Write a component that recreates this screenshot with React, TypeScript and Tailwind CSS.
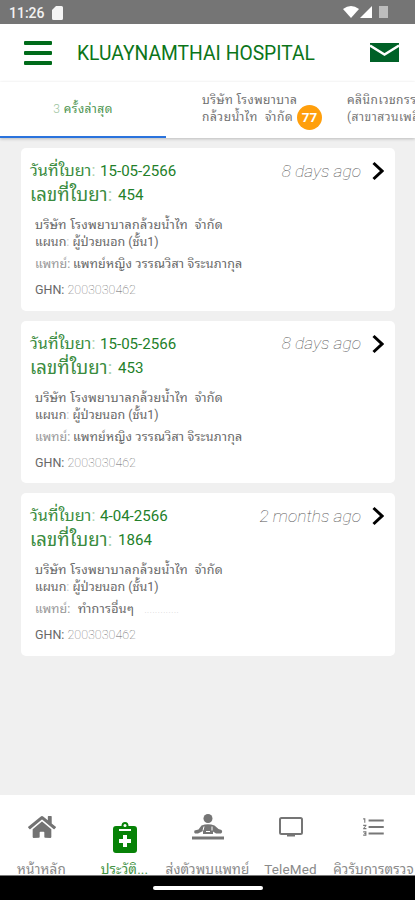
import React from "react";
import { MdFormatListNumbered } from "react-icons/md";
import { FaHome } from "react-icons/fa";

const prescriptions = [
  {
    date: "15-05-2566",
    number: "454",
    ago: "8 days ago",
    doctor: "แพทย์หญิง วรรณวิสา จิระนภากุล",
  },
  {
    date: "15-05-2566",
    number: "453",
    ago: "8 days ago",
    doctor: "แพทย์หญิง วรรณวิสา จิระนภากุล",
  },
  {
    date: "4-04-2566",
    number: "1864",
    ago: "2 months ago",
    doctor: "ทำการอื่นๆ",
    dotted: true,
  },
];

const StatusBar = () => (
  <div className="flex h-[24px] shrink-0 items-center justify-between bg-[#757575] pl-[9px] pr-[27px] text-white">
    <div className="flex items-center gap-[7px] pt-px">
      <span className="w-[36px] whitespace-nowrap text-[14px] font-medium leading-none text-[#f2f2f2]">
        11:26
      </span>
      <svg width="11" height="14" viewBox="0 0 11 14" fill="#f5f5f5">
        <path d="M4 0h5.500A1.500 1.500 0 0 1 11 1.500v11a1.500 1.500 0 0 1-1.500 1.500h-8A1.500 1.500 0 0 1 0 12.500V4z" />
      </svg>
    </div>
    <div className="flex items-center">
      <svg width="16" height="12" viewBox="0 0 16 12" fill="#fff">
        <path d="M0 3Q8-3 16 3L8 12z" />
      </svg>
      <svg className="ml-px" width="12" height="12" viewBox="0 0 12 12" fill="#fff">
        <path d="M12 0v12H0z" />
      </svg>
      <svg className="ml-[7px]" width="9" height="12" viewBox="0 0 9 12" fill="#bdbdbd">
        <path d="M0 0h9v12H0z" />
      </svg>
    </div>
  </div>
);

const Header = () => (
  <header className="flex h-[58px] shrink-0 items-center bg-white pl-[24px] pr-[16px]">
    <svg width="28" height="26" viewBox="0 0 28 26" fill="#006b1a">
      <rect y="1" width="28" height="4" rx="1" />
      <rect y="11" width="28" height="4" rx="1" />
      <rect y="21" width="28" height="4" rx="1" />
    </svg>
    <h1 className="ml-[25px] whitespace-nowrap pt-[2px] text-[19.300px] leading-none text-[#0b7519]">
      KLUAYNAMTHAI HOSPITAL
    </h1>
    <svg className="mb-px ml-auto" width="29" height="19" viewBox="0 0 29 19">
      <path fill="#006127" d="M0 0h29v19H0z" />
      <path d="M0 2.500l14.500 9L29 2.500" fill="none" stroke="#fff" strokeWidth="2.500" />
    </svg>
  </header>
);

const Tabs = () => (
  <nav className="flex h-[56px] w-full shrink-0 overflow-hidden bg-white text-[12px] leading-[17px] text-[#707070] shadow-[0_1px_3px_rgba(0,0,0,0.22)]">
    <div className="flex w-[166px] shrink-0 items-center justify-center border-b-2 border-[#2a73dd] text-[#4b934e]">
      <span className="whitespace-nowrap tracking-[0.450px]">
        <span className="font-light text-[#9cc49e]">3</span> ครั้งล่าสุด
      </span>
    </div>
    <div className="flex w-[181px] shrink-0 pl-[36px] pt-[10px]">
      <p className="w-[95px] whitespace-nowrap">
        <span className="tracking-[0.450px]">บริษัท โรงพยาบาล</span>
        <br />
        <span className="tracking-[0.600px]">กล้วยน้ำไท&nbsp; จำกัด</span>
      </p>
      <span className="mt-[13px] flex size-[25px] shrink-0 items-center justify-center rounded-full bg-[#ff9f0c] text-[13.500px] font-bold text-white">
        77
      </span>
    </div>
    <p className="shrink-0 whitespace-nowrap pt-[10px] tracking-[0.500px]">
      คลินิกเวชกรรมกล้วยน้ำไท
      <br />
      <span className="text-[#777]">(สาขาสวนเพลินมาร์เก็ต)</span>
    </p>
  </nav>
);

const PrescriptionCard = ({ item }: { item: (typeof prescriptions)[number] }) => (
  <article className="flex h-[162.500px] justify-between rounded-[5px] bg-white pl-[9px] pr-[11px]">
    <div className="whitespace-nowrap">
      <div className="pt-[11px] text-[15.100px] leading-[24px] text-[#237f2a]">
        <div className="flex">
          <span className="w-[70px] text-[16.200px] text-[#3a8c40]">
            วันที่ใบยา<span className="text-[#a9cfab]">:</span>
          </span>
          <span>{item.date}</span>
        </div>
        <div className="flex">
          <span className="w-[88px] text-[18.500px] tracking-[0.100px] text-[#3a8c40]">
            เลขที่ใบยา<span className="text-[#a9cfab]">:</span>
          </span>
          <span>{item.number}</span>
        </div>
      </div>
      <div className="pl-[5px] pt-[9px] text-[12.500px] leading-[17px] text-[#686868]">
        <p className="tracking-[0.300px]">บริษัท โรงพยาบาลกล้วยน้ำไท&nbsp; จำกัด</p>
        <p>
          แผนก<span className="text-[#ccc]">:</span> ผู้ป่วยนอก (ชั้น1)
        </p>
        <p className="mt-[5px] flex">
          <span className="w-[38px] text-[#999]">แพทย์:</span>
          <span className={item.dotted ? "ml-[5px] tracking-[0.300px]" : "tracking-[0.200px]"}>
            {item.doctor}
          </span>
          {item.dotted && (
            <span className="ml-[10px] font-thin text-[#bbb]">.............</span>
          )}
        </p>
        <p className="mt-[9px]">
          GHN: <span className="font-thin text-[#666]">2003030462</span>
        </p>
      </div>
    </div>
    <div className="flex h-[20px] items-center pt-[23px]">
      <span className="whitespace-nowrap pt-px text-[17.400px] font-thin italic leading-none text-[#555]">
        {item.ago}
      </span>
      <svg className="ml-[11px]" width="12" height="20" viewBox="0 0 12 20" fill="none">
        <path d="M1.500 2l8.500 8-8.500 8" stroke="#000" strokeWidth="3" />
      </svg>
    </div>
  </article>
);

const ClipboardIcon = () => (
  <svg width="24" height="32" viewBox="0 0 24 32">
    <path
      fill="#078207"
      d="M3 5h5.500a3.500 4 0 0 1 7 0H21a3 3 0 0 1 3 3v21a3 3 0 0 1-3 3H3a3 3 0 0 1-3-3V8a3 3 0 0 1 3-3z"
    />
    <circle cx="12" cy="4.500" r="1.500" fill="#fff" />
    <path fill="#fff" d="M6 8h12v2H6zM10 14h4v4h4v4h-4v4h-4v-4H6v-4h4z" />
  </svg>
);

const PhysioIcon = () => (
  <svg width="32" height="26" viewBox="0 0 32 26" fill="#757575">
    <circle cx="16" cy="4.500" r="4.500" />
    <path d="M9.500 11.500q6.500-2.500 13 0l4 3.500 3 1q1.500 2-.5 3.500h-5l-3-2v2.500H11V17l-5 2.500H3q-1.500-1-.5-3l4-1z" />
    <path d="M12 12.500l-1 4M20 12.500v4M14 17.500h4" stroke="#fff" fill="none" />
    <path d="M0 22.500h32v3H0z" />
  </svg>
);

const TvIcon = () => (
  <svg width="24" height="20" viewBox="0 0 24 20" fill="none" stroke="#757575" strokeWidth="2">
    <rect x="1" y="1" width="22" height="16" rx="1.500" />
    <path d="M8 18.500h8" />
  </svg>
);

const navItems = [
  { label: "หน้าหลัก", icon: <FaHome size={28} color="#737373" /> },
  { label: "ประวัติ...", icon: <ClipboardIcon />, active: true },
  { label: "ส่งตัวพบแพทย์", icon: <PhysioIcon /> },
  { label: "TeleMed", icon: <TvIcon /> },
  { label: "คิวรับการตรวจ", icon: <MdFormatListNumbered size={26} color="#777" /> },
];

const BottomNav = () => (
  <nav className="flex h-[81px] shrink-0 overflow-hidden border-b border-[#777] bg-white">
    {navItems.map((item) => (
      <div
        key={item.label}
        className={`flex w-[83px] shrink-0 flex-col items-center whitespace-nowrap text-[13.500px] leading-[18px] tracking-[0.150px] ${
          item.active ? "text-[#459345]" : "text-[#8a8a8a]"
        }`}
      >
        <div className={`flex h-[64px] shrink-0 items-center ${item.active ? "pt-[19px]" : ""}`}>
          {item.icon}
        </div>
        <span className="pt-px">{item.label}</span>
      </div>
    ))}
  </nav>
);

const App = () => {
  return (
    <div className="flex h-[900px] w-[415px] flex-col overflow-hidden bg-[#f0f0f0] font-[Roboto,'Noto_Sans_Thai_Looped',Loma,'Noto_Sans_Thai','Noto_Sans',sans-serif]">
      <StatusBar />
      <Header />
      <Tabs />
      <main className="flex grow flex-col gap-[10px] pl-[21px] pr-[20px] pt-[10px]">
        {prescriptions.map((item) => (
          <PrescriptionCard key={item.number} item={item} />
        ))}
      </main>
      <BottomNav />
      <div className="flex h-[24px] shrink-0 items-center justify-center bg-black">
        <div className="h-[4px] w-[110px] rounded-full bg-white" />
      </div>
    </div>
  );
};

export default App;
